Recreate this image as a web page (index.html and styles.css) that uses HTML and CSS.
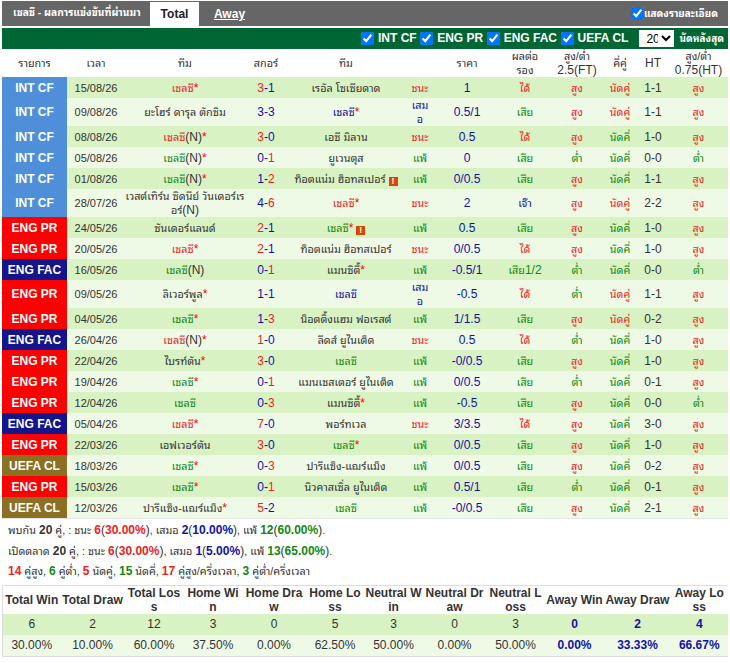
FILE: index.html
```html
<!DOCTYPE html>
<html lang="th">
<head>
<meta charset="utf-8">
<title>เชลซี</title>
<link rel="stylesheet" href="styles.css">
</head>
<body>
<div class="titlebar">
  <span class="title">เชลซี - ผลการแข่งขันที่ผ่านมา</span>
  <span class="tab active">Total</span>
  <a class="tab link">Away</a>
  <label class="detail"><input type="checkbox" checked>แสดงรายละเอียด</label>
</div>
<div class="filterbar">
  <label><input type="checkbox" checked>INT CF</label>
  <label><input type="checkbox" checked>ENG PR</label>
  <label><input type="checkbox" checked>ENG FAC</label>
  <label><input type="checkbox" checked>UEFA CL</label>
  <select class="count"><option>20</option></select>
  <span class="last">นัดหลังสุด</span>
</div>
<table class="matches">
<colgroup><col class="c1"><col class="c2"><col class="c3"><col class="c4"><col class="c5"><col class="c6"><col class="c7"><col class="c8"><col class="c9"><col class="c10"><col class="c11"><col class="c12"></colgroup>
<thead><tr><th>รายการ</th><th>เวลา</th><th>ทีม</th><th>สกอร์</th><th>ทีม</th><th></th><th>ราคา</th><th>ผลต่อ<br>รอง</th><th>สูง/ต่ำ<br><b>2.5(FT)</b></th><th>คี่คู่</th><th><b>HT</b></th><th>สูง/ต่ำ<br><b>0.75(HT)</b></th></tr></thead>
<tbody>
<tr><td class="lg intcf">INT CF</td><td class="d">15/08/26</td><td class="r">เชลซี<i>*</i></td><td><span class="r">3</span><span class="b">-1</span></td><td>เรอัล โซเซียดาด</td><td class="r">ชนะ</td><td class="b">1</td><td class="r">ได้</td><td class="r">สูง</td><td class="r">นัดคู่</td><td>1-1</td><td class="r">สูง</td></tr>
<tr class="tall"><td class="lg intcf">INT CF</td><td class="d">09/08/26</td><td>ยะโฮร์ ดารุล ตักซิม</td><td class="b">3-3</td><td class="b">เชลซี<i>*</i></td><td class="b">เสมอ</td><td class="b">0.5/1</td><td class="g">เสีย</td><td class="r">สูง</td><td class="r">นัดคู่</td><td>1-1</td><td class="r">สูง</td></tr>
<tr><td class="lg intcf">INT CF</td><td class="d">08/08/26</td><td class="r">เชลซี<s>(N)</s><i>*</i></td><td><span class="r">3</span><span class="b">-0</span></td><td>เอซี มิลาน</td><td class="r">ชนะ</td><td class="b">0.5</td><td class="r">ได้</td><td class="r">สูง</td><td class="g">นัดคี่</td><td>1-0</td><td class="r">สูง</td></tr>
<tr><td class="lg intcf">INT CF</td><td class="d">05/08/26</td><td class="g">เชลซี<s>(N)</s><i>*</i></td><td><span class="b">0-</span><span class="r">1</span></td><td>ยูเวนตุส</td><td class="g">แพ้</td><td class="b">0</td><td class="g">เสีย</td><td class="g">ต่ำ</td><td class="g">นัดคี่</td><td>0-0</td><td class="g">ต่ำ</td></tr>
<tr><td class="lg intcf">INT CF</td><td class="d">01/08/26</td><td class="g">เชลซี<s>(N)</s><i>*</i></td><td><span class="b">1-</span><span class="r">2</span></td><td>ท็อตแน่ม ฮ็อทสเปอร์ <span class="warn">!</span></td><td class="g">แพ้</td><td class="b">0/0.5</td><td class="g">เสีย</td><td class="r">สูง</td><td class="g">นัดคี่</td><td>1-1</td><td class="r">สูง</td></tr>
<tr class="tall"><td class="lg intcf">INT CF</td><td class="d">28/07/26</td><td>เวสต์เทิร์น ซิดนีย์ วันเดอร์เรอร์<s>(N)</s></td><td><span class="b">4-</span><span class="r">6</span></td><td class="r">เชลซี<i>*</i></td><td class="r">ชนะ</td><td class="b">2</td><td class="b">เจ๊า</td><td class="r">สูง</td><td class="r">นัดคู่</td><td>2-2</td><td class="r">สูง</td></tr>
<tr><td class="lg engpr">ENG PR</td><td class="d">24/05/26</td><td>ซันเดอร์แลนด์</td><td><span class="r">2</span><span class="b">-1</span></td><td class="g">เชลซี<i>*</i> <span class="warn">!</span></td><td class="g">แพ้</td><td class="b">0.5</td><td class="g">เสีย</td><td class="r">สูง</td><td class="g">นัดคี่</td><td>1-0</td><td class="r">สูง</td></tr>
<tr><td class="lg engpr">ENG PR</td><td class="d">20/05/26</td><td class="r">เชลซี<i>*</i></td><td><span class="r">2</span><span class="b">-1</span></td><td>ท็อตแน่ม ฮ็อทสเปอร์</td><td class="r">ชนะ</td><td class="b">0/0.5</td><td class="r">ได้</td><td class="r">สูง</td><td class="g">นัดคี่</td><td>1-0</td><td class="r">สูง</td></tr>
<tr><td class="lg engfac">ENG FAC</td><td class="d">16/05/26</td><td class="g">เชลซี<s>(N)</s></td><td><span class="b">0-</span><span class="r">1</span></td><td>แมนซิตี้<i>*</i></td><td class="g">แพ้</td><td class="b">-0.5/1</td><td class="g">เสีย<em>1/2</em></td><td class="g">ต่ำ</td><td class="g">นัดคี่</td><td>0-0</td><td class="g">ต่ำ</td></tr>
<tr class="tall"><td class="lg engpr">ENG PR</td><td class="d">09/05/26</td><td>ลิเวอร์พูล<i>*</i></td><td class="b">1-1</td><td class="b">เชลซี</td><td class="b">เสมอ</td><td class="b">-0.5</td><td class="r">ได้</td><td class="g">ต่ำ</td><td class="r">นัดคู่</td><td>1-1</td><td class="r">สูง</td></tr>
<tr><td class="lg engpr">ENG PR</td><td class="d">04/05/26</td><td class="g">เชลซี<i>*</i></td><td><span class="b">1-</span><span class="r">3</span></td><td>น็อตติ้งแฮม ฟอเรสต์</td><td class="g">แพ้</td><td class="b">1/1.5</td><td class="g">เสีย</td><td class="r">สูง</td><td class="r">นัดคู่</td><td>0-2</td><td class="r">สูง</td></tr>
<tr><td class="lg engfac">ENG FAC</td><td class="d">26/04/26</td><td class="r">เชลซี<s>(N)</s><i>*</i></td><td><span class="r">1</span><span class="b">-0</span></td><td>ลีดส์ ยูไนเต็ด</td><td class="r">ชนะ</td><td class="b">0.5</td><td class="r">ได้</td><td class="g">ต่ำ</td><td class="g">นัดคี่</td><td>1-0</td><td class="r">สูง</td></tr>
<tr><td class="lg engpr">ENG PR</td><td class="d">22/04/26</td><td>ไบรท์ตัน<i>*</i></td><td><span class="r">3</span><span class="b">-0</span></td><td class="g">เชลซี</td><td class="g">แพ้</td><td class="b">-0/0.5</td><td class="g">เสีย</td><td class="r">สูง</td><td class="g">นัดคี่</td><td>1-0</td><td class="r">สูง</td></tr>
<tr><td class="lg engpr">ENG PR</td><td class="d">19/04/26</td><td class="g">เชลซี<i>*</i></td><td><span class="b">0-</span><span class="r">1</span></td><td>แมนเชสเตอร์ ยูไนเต็ด</td><td class="g">แพ้</td><td class="b">0/0.5</td><td class="g">เสีย</td><td class="g">ต่ำ</td><td class="g">นัดคี่</td><td>0-1</td><td class="r">สูง</td></tr>
<tr><td class="lg engpr">ENG PR</td><td class="d">12/04/26</td><td class="g">เชลซี</td><td><span class="b">0-</span><span class="r">3</span></td><td>แมนซิตี้<i>*</i></td><td class="g">แพ้</td><td class="b">-0.5</td><td class="g">เสีย</td><td class="r">สูง</td><td class="g">นัดคี่</td><td>0-0</td><td class="g">ต่ำ</td></tr>
<tr><td class="lg engfac">ENG FAC</td><td class="d">05/04/26</td><td class="r">เชลซี<i>*</i></td><td><span class="r">7</span><span class="b">-0</span></td><td>พอร์ทเวล</td><td class="r">ชนะ</td><td class="b">3/3.5</td><td class="r">ได้</td><td class="r">สูง</td><td class="g">นัดคี่</td><td>3-0</td><td class="r">สูง</td></tr>
<tr><td class="lg engpr">ENG PR</td><td class="d">22/03/26</td><td>เอฟเวอร์ตัน</td><td><span class="r">3</span><span class="b">-0</span></td><td class="g">เชลซี<i>*</i></td><td class="g">แพ้</td><td class="b">0/0.5</td><td class="g">เสีย</td><td class="r">สูง</td><td class="g">นัดคี่</td><td>1-0</td><td class="r">สูง</td></tr>
<tr><td class="lg uefacl">UEFA CL</td><td class="d">18/03/26</td><td class="g">เชลซี<i>*</i></td><td><span class="b">0-</span><span class="r">3</span></td><td>ปารีแซ็ง-แฌร์แม็ง</td><td class="g">แพ้</td><td class="b">0/0.5</td><td class="g">เสีย</td><td class="r">สูง</td><td class="g">นัดคี่</td><td>0-2</td><td class="r">สูง</td></tr>
<tr><td class="lg engpr">ENG PR</td><td class="d">15/03/26</td><td class="g">เชลซี<i>*</i></td><td><span class="b">0-</span><span class="r">1</span></td><td>นิวคาสเซิ่ล ยูไนเต็ด</td><td class="g">แพ้</td><td class="b">0.5/1</td><td class="g">เสีย</td><td class="g">ต่ำ</td><td class="g">นัดคี่</td><td>0-1</td><td class="r">สูง</td></tr>
<tr><td class="lg uefacl">UEFA CL</td><td class="d">12/03/26</td><td>ปารีแซ็ง-แฌร์แม็ง<i>*</i></td><td><span class="r">5</span><span class="b">-2</span></td><td class="g">เชลซี</td><td class="g">แพ้</td><td class="b">-0/0.5</td><td class="g">เสีย</td><td class="r">สูง</td><td class="g">นัดคี่</td><td>2-1</td><td class="r">สูง</td></tr>
</tbody>
</table>
<div class="summary">
  <p>พบกัน <b>20</b> คู่, : ชนะ <b class="r">6</b><em>(</em><b class="r">30.00%</b><em>)</em>, เสมอ <b class="b">2</b><em>(</em><b class="b">10.00%</b><em>)</em>, แพ้ <b class="g">12</b><em>(</em><b class="g">60.00%</b><em>)</em>.</p>
  <p>เปิดตลาด <b>20</b> คู่, : ชนะ <b class="r">6</b><em>(</em><b class="r">30.00%</b><em>)</em>, เสมอ <b class="b">1</b><em>(</em><b class="b">5.00%</b><em>)</em>, แพ้ <b class="g">13</b><em>(</em><b class="g">65.00%</b><em>)</em>.</p>
  <p><b class="r">14</b> คู่สูง, <b class="g">6</b> คู่ต่ำ, <b class="r">5</b> นัดคู่, <b class="g">15</b> นัดคี่, <b class="r">17</b> คู่สูง/ครึ่งเวลา, <b class="g">3</b> คู่ต่ำ/ครึ่งเวลา</p>
</div>
<table class="stats">
<colgroup><col class="s1"><col class="s2"><col class="s3"><col class="s4"><col class="s5"><col class="s6"><col class="s7"><col class="s8"><col class="s9"><col class="s10"><col class="s11"><col class="s12"></colgroup>
<thead><tr><th>Total Win</th><th>Total Draw</th><th>Total Loss</th><th>Home Win</th><th>Home Draw</th><th>Home Loss</th><th>Neutral Win</th><th>Neutral Draw</th><th>Neutral Loss</th><th>Away Win</th><th>Away Draw</th><th>Away Loss</th></tr></thead>
<tbody>
<tr><td>6</td><td>2</td><td>12</td><td>3</td><td>0</td><td>5</td><td>3</td><td>0</td><td>3</td><td class="hl">0</td><td class="hl">2</td><td class="hl">4</td></tr>
<tr><td>30.00%</td><td>10.00%</td><td>60.00%</td><td>37.50%</td><td>0.00%</td><td>62.50%</td><td>50.00%</td><td>0.00%</td><td>50.00%</td><td class="hl">0.00%</td><td class="hl">33.33%</td><td class="hl">66.67%</td></tr>
</tbody>
</table>
</body>
</html>
```

FILE: styles.css
```css
* { box-sizing: border-box; }
body { margin: 1px 2px 0; font: 10.8px/1.2 "Liberation Sans", "Noto Sans Thai Looped", sans-serif; color: #333; background: #fff; }
input[type=checkbox] { width: 13px; height: 13px; margin: 0 4px 0 0; flex: none; }

.titlebar { display: flex; align-items: flex-end; height: 25px; background: #666; color: #fff; }
.title { align-self: center; padding-left: 11px; width: 148px; font-size: 10.2px; font-weight: bold; white-space: nowrap; }
.tab { display: flex; align-items: center; justify-content: center; height: 24px; font-size: 12px; font-weight: bold; }
.tab.active { width: 49px; background: #fff; color: #222; }
.tab.link { width: 61px; color: #fff; text-decoration: underline; }
.detail { display: flex; align-items: center; align-self: center; margin-left: auto; padding-right: 10px; font-size: 10px; font-weight: bold; }
.detail input { margin-right: 0; }

.filterbar { display: flex; align-items: center; justify-content: flex-end; height: 21px; margin-top: 2px; padding-right: 4px; background: #063; color: #fff; font-size: 10px; font-weight: bold; }
.filterbar label { display: flex; align-items: center; margin-right: 3.5px; font-size: 12px; }
.filterbar label:nth-child(4) { margin-right: 0; }
.count { width: 35px; height: 17px; margin: 0 5px 0 11px; font: 12px "Liberation Sans", sans-serif; color: #000; background: #fff; border: 0; padding: 0 0 0 3px; }

.matches { width: 726px; table-layout: fixed; border-collapse: collapse; }
.c1 { width: 65px; } .c2 { width: 58px; } .c3 { width: 120px; } .c4 { width: 42px; }
.c5 { width: 118px; } .c6 { width: 30px; } .c7 { width: 64px; } .c8 { width: 52px; }
.c9 { width: 52px; } .c10 { width: 34px; } .c11 { width: 32px; } .c12 { width: 59px; }
.matches th { height: 28px; padding: 0 1px; font-weight: normal; background: #fff; line-height: 14px; vertical-align: middle; }
.matches th b { font-size: 12px; font-weight: normal; }
.matches td { height: 21px; padding: 0; text-align: center; line-height: 14px; word-break: break-all; }
.matches tr.tall td { height: 28px; }
.matches td:nth-child(6) { padding: 0 5px; }
.matches td:nth-child(4), .matches td:nth-child(7), .matches td:nth-child(11) { font-size: 12px; }
.matches tbody tr:nth-child(odd) { background: #d9f2c4; }
.matches tbody tr:nth-child(even) { background: #eefae6; }
.matches .d { font-size: 11px; }
.matches .lg { color: #fff; font-size: 12px; font-weight: bold; }
.matches tbody tr .intcf { background: #4f8fd9; }
.matches tbody tr .engpr { background: #f00; }
.matches tbody tr .engfac { background: #14148c; }
.matches tbody tr .uefacl { background: #8b6f22; }

.r { color: #e22; }
.b { color: #11a; }
.g { color: #181; }
i { font-style: normal; font-size: 12px; color: #f00; }
s { text-decoration: none; font-size: 12px; color: #333; }
em { font-style: normal; font-size: 12px; }
.warn { display: inline-block; width: 9px; height: 9px; background: #d40; color: #fff; font-size: 9px; line-height: 9px; font-weight: bold; text-align: center; vertical-align: -1px; }

.summary { height: 67px; padding-top: 1px; padding-left: 6px; border-top: 1px solid #e5e5e5; }
.summary p { margin: 0; height: 20.5px; line-height: 20px; }
.summary b { font-size: 12px; color: #333; }
.summary b.r { color: #e22; }
.summary b.b { color: #11a; }
.summary b.g { color: #181; }

.stats { width: 726px; table-layout: fixed; border-collapse: collapse; border: 1px solid #ddd; font-size: 12px; }
.s1 { width: 58px; } .s2 { width: 64px; } .s3 { width: 59px; } .s4 { width: 59px; } .s5 { width: 63px; } .s6 { width: 59px; }
.s7 { width: 58px; } .s8 { width: 64px; } .s9 { width: 58px; } .s10 { width: 60px; } .s11 { width: 66px; } .s12 { width: 58px; }
.stats th { height: 28px; padding: 0 1px; line-height: 14px; background: #fff; word-break: break-all; }
.stats td { height: 21px; padding: 0; text-align: center; }
.stats tbody tr:nth-child(odd) { background: #d9f2c4; }
.stats tbody tr:nth-child(even) { background: #eefae6; }
.stats .hl { color: #11a; font-weight: bold; }
```
